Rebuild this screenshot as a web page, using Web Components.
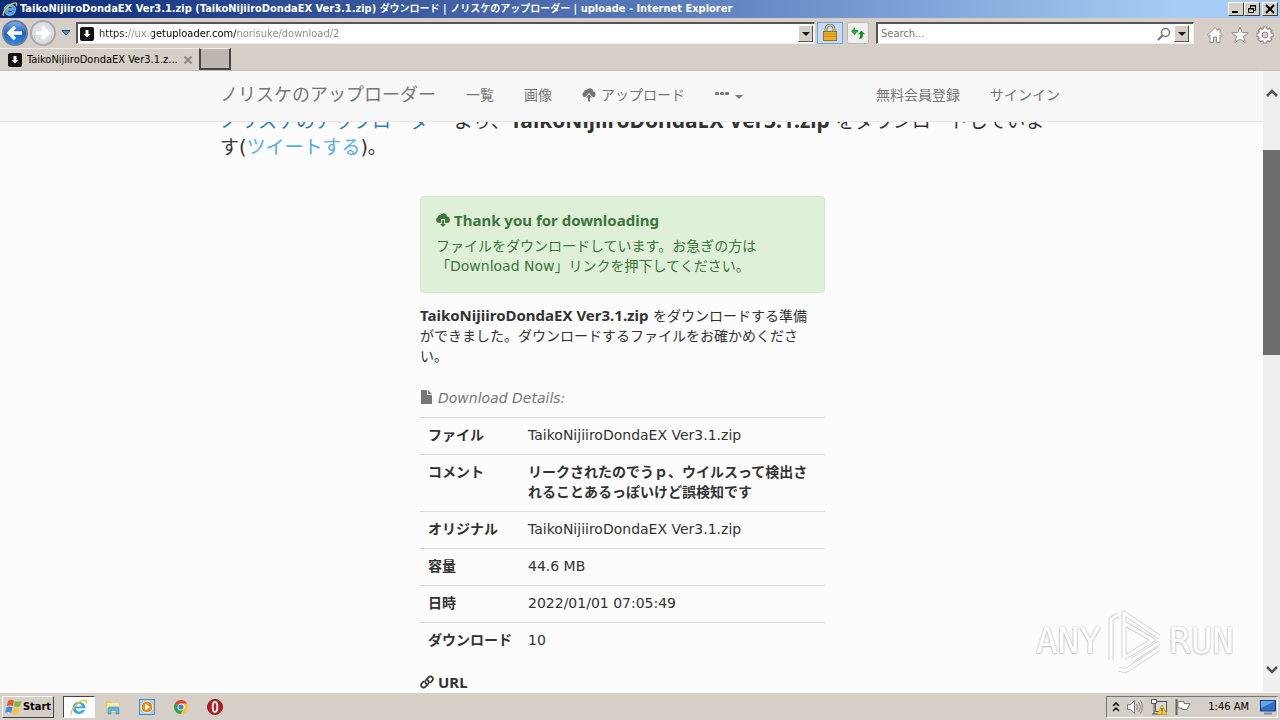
<!DOCTYPE html>
<html lang="ja">
<head>
<meta charset="utf-8">
<title>TaikoNijiiroDondaEX Ver3.1.zip</title>
<style>
	html, body {
		height: 100%;
		margin: 0;
	}
	body {
		display: flex;
		flex-direction: column;
		overflow: hidden;
		background: #fcfcfc;
		color: #333;
		font: 14px/20px "DejaVu Sans", "Noto Sans CJK JP", sans-serif;
		--face: #d6cfc8;
		--ui: 11px/14px "DejaVu Sans Condensed", "DejaVu Sans", "Noto Sans CJK JP", sans-serif;
		--bold: "Noto Sans", "Noto Sans CJK JP", sans-serif;
	}
</style>
</head>
<body>
<title-bar>TaikoNijiiroDondaEX Ver3.1.zip (TaikoNijiiroDondaEX Ver3.1.zip) <small>ダウンロード</small> | <small>ノリスケのアップローダー</small> | uploade - Internet Explorer</title-bar>
<address-bar></address-bar>
<tab-strip>TaikoNijiiroDondaEX Ver3.1.z...</tab-strip>
<page-view>
	<site-nav slot="nav"></site-nav>
	<download-page></download-page>
</page-view>
<task-bar></task-bar>

<script>
(function () {
	const icons = {
		ie: `<svg viewBox="0 0 18 18"><path d="M15.500 10.500H6.200c.2 3.200 4.300 3.700 5.400 1.400h3.600C12.500 18.500 2.500 17.500 2.500 9.800 2.500 1.500 16 1.500 15.500 10.500zM6.300 8.300h5.400c-.2-3-5-3-5.400 0z" fill="#3aa6ea" stroke="#d8f3ff" stroke-width=".5"/><path d="M2 16.500C-1 14 7 4 13.500 2.300c3-.8 3.500 1 2.500 3.200" fill="none" stroke="#f2c230" stroke-width="1.500"/></svg>`,
		back: `<svg viewBox="0 0 28 28"><defs><linearGradient id="g" x2="0" y2="1"><stop stop-color="#7fb5ee"/><stop offset=".5" stop-color="#1f62c4"/><stop offset="1" stop-color="#2d8ce8"/></linearGradient></defs><circle cx="14" cy="14" r="12" fill="url(#g)" stroke="#6c7c98" stroke-width="2"/><path d="M21 14H8m6-6-6 6 6 6" fill="none" stroke="#fff" stroke-width="3.500"/></svg>`,
		forward: `<svg viewBox="0 0 28 28"><circle cx="14" cy="14" r="12" fill="#dde0e2" stroke="#aaa9aa" stroke-width="2"/><path d="M7 14h12m-6-6 6 6-6 6" fill="none" stroke="#fff" stroke-width="4"/><path d="M5 16a9 9 0 0 0 18 0" fill="none" stroke="#c5cbd1"/></svg>`,
		history: `<svg viewBox="0 0 10 8"><path d="M1 1.500h8L5 6z" fill="#4e9bd0" stroke="#153f77"/></svg>`,
		down: `<svg viewBox="0 0 8 8"><path d="M0 2h8L4 6z" fill="#111"/></svg>`,
		site: `<svg viewBox="0 0 14 14"><rect width="14" height="14" rx="2" fill="#111"/><path d="M5.500 3h3v4h2L7 10.500 3.500 7h2z" fill="#fff"/></svg>`,
		lock: `<svg viewBox="0 0 16 18"><path d="M4 8V5a4 4 0 0 1 8 0v3" fill="none" stroke="#8c805a" stroke-width="3"/><path d="M4 8V5a4 4 0 0 1 8 0v3" fill="none" stroke="#e6dcae"/><rect x="1.500" y="7.500" width="13" height="9" fill="#edb127" stroke="#9d741b"/><path d="M2 10h12M2 12.500h12" stroke="#c88d18"/></svg>`,
		refresh: `<svg viewBox="0 0 16 16"><path d="M0 6l4.500-4.500v3H8V7H6.500L4.500 10.500z" fill="#2ca33a"/><path d="M16 9.500l-4-4.500-4 4.500h2.500V12L9 14.500h3l1.500-2.500V9.500z" fill="#178a2b"/></svg>`,
		search: `<svg viewBox="0 0 14 14"><circle cx="8.500" cy="5.500" r="4" fill="none" stroke="#777" stroke-width="1.500"/><path d="M5.500 8.500 1 13" stroke="#777" stroke-width="2"/></svg>`,
		home: `<svg viewBox="0 0 18 18"><path d="M9 1.500 1.500 9l1.300 1.200L4 9v7.500h3.500V11h3v5.500H14V9l1.200 1.200L16.500 9 14 6.500V3h-2v1.500z" fill="#fff" stroke="#918b88"/></svg>`,
		star: `<svg viewBox="0 0 18 18"><path d="m9 1 2.200 5.500 6 .3-4.700 3.700 1.700 6L9 13.200l-5.200 3.300 1.700-6L.8 6.800l6-.3z" fill="#fff" stroke="#918b88"/></svg>`,
		gear: `<svg viewBox="0 0 18 18"><g fill="none"><g stroke="#8a8481" stroke-width="4.600"><path d="M9 .5v17M.5 9h17M3 3l12 12M15 3 3 15"/></g><circle cx="9" cy="9" r="4.800" stroke="#8a8481" stroke-width="4.400"/><g stroke="#fff" stroke-width="2.600"><path d="M9 1.500v15M1.500 9h15M3.700 3.700l10.600 10.600M14.300 3.700 3.700 14.300"/></g><circle cx="9" cy="9" r="4.800" stroke="#fff" stroke-width="2.600"/></g><circle cx="9" cy="9" r="3" fill="#d6cfc8" stroke="#8a8481"/></svg>`,
		close: `<svg viewBox="0 0 10 10"><path d="m1.500 1.500 7 7m0-7-7 7" stroke="#8c8580" stroke-width="2"/></svg>`,
		up: `<svg viewBox="0 0 12 8"><path d="m1 7 5-5 5 5" fill="none" stroke="#555" stroke-width="2.500"/></svg>`,
		chevron: `<svg viewBox="0 0 12 8"><path d="m1 1 5 5 5-5" fill="none" stroke="#555" stroke-width="2.500"/></svg>`,
		upload: `<svg viewBox="0 0 14 14"><path d="M3 9.500A3 3 0 0 1 1.800 4 2.300 2.300 0 0 1 4.600 2 3.600 3.600 0 0 1 11.300 3.300 3.200 3.200 0 0 1 11 9.500z" fill="#777"/><path d="M7 5 2.500 10H5v4.500h4V10h2.500z" fill="#f8f8f8"/><path d="M7 6.200 3.800 9.500H6v4h2v-4h2.200z" fill="#777"/></svg>`,
		download: `<svg viewBox="0 0 14 14"><path d="M3 10a3 3 0 0 1-1.200-5.700A2.300 2.300 0 0 1 4.600 2.200 3.600 3.600 0 0 1 11.300 3.500 3.300 3.300 0 0 1 11 10z" fill="#3c763d"/><path d="M5 6h4v4h3l-5 4-5-4h3z" fill="#dff0d8"/><path d="M6 7h2v4h2l-3 3-3-3h2z" fill="#3c763d"/></svg>`,
		file: `<svg viewBox="0 0 14 14"><path d="M1 0h6v5h5v9H1z" fill="#777"/><path d="M8 0v4h4z" fill="#777"/></svg>`,
		link: `<svg viewBox="0 0 14 14"><g fill="none" stroke="#333" stroke-width="1.700" stroke-linecap="round"><path d="M6.200 8.800C4.500 7 5 6 6 5l2.500-2.700c1-1 2.600-1.100 3.600-.2s1 2.500.1 3.600L10.500 7.500"/><path d="M7.800 5.200C9.500 7 9 8 8 9l-2.500 2.700c-1 1-2.600 1.100-3.600.2s-1-2.500-.1-3.600L3.500 6.500"/></g></svg>`,
		windows: `<svg viewBox="0 0 18 18"><path d="M3 3c2-1.500 4-1.500 6-.5L7.800 8C6 7 4 7 1.800 8.200z" fill="#e8572a"/><path d="M10 3c2 1 4 1 6.500-.2L15 8.200C13 9.200 11 9.200 8.800 8z" fill="#7dbb3c"/><path d="M1.500 9.500c2-1.200 4-1.200 6-.2l-1.300 5.500c-2-1-4-1-6 .2z" fill="#3d8be0"/><path d="M8.500 9.500c2 1 4 1 6.200 0l-1.400 5.500c-2 1-4 1-6.200 0z" fill="#f6c338"/></svg>`,
		folder: `<svg viewBox="0 0 18 18"><path d="M2 3h5l1 1.500h7V15H2z" fill="#e9c65e"/><path d="M3 5h12v9H3z" fill="#f7e9a6"/><path d="M4 16v-5.500q0-1.500 1.500-1.500h8q1.500 0 1.500 1.500V16h-3v-3.500H7V16z" fill="#62b5e0" stroke="#3f8dbe" stroke-width=".6"/></svg>`,
		player: `<svg viewBox="0 0 18 18"><rect x="1.500" y="1.500" width="15" height="15" fill="#a9d2f1" stroke="#4d8cc2"/><circle cx="9" cy="9" r="5.800" fill="#f08818" stroke="#fff" stroke-width=".8"/><path d="m7 5.500 5 3.500-5 3.500z" fill="#fff"/></svg>`,
		chrome: `<svg viewBox="0 0 18 18"><circle cx="9" cy="9" r="7" fill="#f5c62c"/><path d="M9 9 2.900 5.500A7 7 0 0 1 15.100 5.500H9z" fill="#dc4437"/><path d="M2.900 5.500A7 7 0 0 0 8.500 16L12 10.700 9 9z" fill="#2e9f58"/><circle cx="9" cy="9" r="3.500" fill="#fff"/><circle cx="9" cy="9" r="2.600" fill="#4480df"/></svg>`,
		opera: `<svg viewBox="0 0 18 18"><circle cx="9" cy="9" r="7.500" fill="#b91c22" stroke="#7e1518"/><ellipse cx="9" cy="9" rx="2.300" ry="5" fill="#b91c22" stroke="#fff" stroke-width="1.800"/></svg>`,
		more: `<svg viewBox="0 0 8 12"><path d="m1 5 3-3 3 3M1 10l3-3 3 3" fill="none" stroke="#000" stroke-width="1.500"/></svg>`,
		volume: `<svg viewBox="0 0 18 18"><path d="M1.500 6.500h3l4-4v13l-4-4h-3z" fill="#fff" stroke="#777"/><path d="M10.500 6q2 3 0 6M12.500 4q3.500 5 0 10M14.500 2.500q4 6.500 0 13" fill="none" stroke="#888"/></svg>`,
		network: `<svg viewBox="0 0 18 18"><rect x="5.500" y="3.500" width="11" height="10" fill="#d9d9d9" stroke="#555"/><path d="M1.500 1.500h5v4h-5z" fill="#fff" stroke="#555"/><path d="M4 5v11M2 16h8" fill="none" stroke="#555"/><path d="m12 7 5 9.500H7z" fill="#f8d32a" stroke="#ae8b12" stroke-width=".7"/><path d="M12 10v3.500m0 1v1" stroke="#333"/></svg>`,
		flag: `<svg viewBox="0 0 18 18"><path d="M2.500 1v16" stroke="#666" stroke-width="2"/><path d="M4 3.500h6v2h6l-3 6H8v-1.500H4z" fill="#fff" stroke="#777"/></svg>`,
		desktop: `<svg viewBox="0 0 18 18"><rect x="1.500" y="2.500" width="15" height="10.500" fill="#2a72cb" stroke="#1f3f73"/><path d="M2 3h14L2 10z" fill="#63a7ec"/><path d="M5 15.500h8" stroke="#889" stroke-width="2"/></svg>`,
		play: `<svg viewBox="0 0 60 66"><defs><path id="p" d="M6 52V11l7-4M14 61l6 2 34-22M19 50V5l35 24M19 50l29-18-29-17M27 52l27-17" fill="none" stroke-linejoin="round"/></defs><use href="#p" stroke="#d2d2d2" stroke-width="5"/><use href="#p" stroke="#fff" stroke-width="3"/></svg>`
	};

	function define(name, html) {
		const template = document.createElement("template");
		template.innerHTML = html;
		customElements.define(name, class extends HTMLElement {
			constructor() {
				super();
				this.attachShadow({ mode: "open" }).appendChild(template.content.cloneNode(true));
			}
		});
	}

	class UiIcon extends HTMLElement {
		connectedCallback() {
			if (this.shadowRoot) return;
			this.attachShadow({ mode: "open" }).innerHTML = `
				<style>
				:host { display: inline-block; width: 14px; height: 14px; flex: none; }
				svg { display: block; width: 100%; height: 100%; }
				</style>${icons[this.getAttribute("name")] || ""}`;
		}
	}
	customElements.define("ui-icon", UiIcon);

	define("title-bar", `
		<style>
		:host {
			display: flex;
			align-items: center;
			height: 18px;
			padding: 0 2px;
			gap: 2px;
			background: linear-gradient(90deg, #0a2a78, #5677b8 50%, #a6cdf5 92%);
			color: #fff;
			font: var(--ui);
			font-weight: bold;
		}
		.text { flex: 1; white-space: nowrap; overflow: hidden; }
		::slotted(small) { font-size: 10px; }
		ui-icon { width: 16px; height: 16px; }
		button {
			width: 16px;
			height: 14px;
			padding: 0;
			display: grid;
			place-items: center;
			background: var(--face);
			border: 1px solid;
			border-color: #fff #404040 #404040 #fff;
		}
		button:last-child { margin-left: 2px; }
		.buttons { display: flex; }
		svg { width: 10px; height: 10px; }
		</style>
		<ui-icon name="ie"></ui-icon>
		<div class="text"><slot></slot></div>
		<div class="buttons">
			<button aria-label="Minimize"><svg viewBox="0 0 10 10"><path d="M1 8h6" stroke="#000" stroke-width="2"/></svg></button>
			<button aria-label="Restore"><svg viewBox="0 0 10 10"><path d="M3.500 4V1.500h5v5H7M3 2h6M1.500 4.500h5v4h-5zM1 5h6" fill="none" stroke="#000"/></svg></button>
			<button aria-label="Close"><svg viewBox="0 0 10 10"><path d="m1 1 8 8m0-8-8 8" stroke="#000" stroke-width="2"/></svg></button>
		</div>
	`);

	define("address-bar", `
		<style>
		:host {
			display: flex;
			align-items: center;
			height: 30px;
			padding: 0 6px 0 1px;
			background: var(--face);
			font: var(--ui);
		}
		button {
			display: grid;
			place-items: center;
			padding: 0;
			border: 0;
			background: none;
		}
		.round ui-icon { width: 28px; height: 28px; }
		.history { width: 18px; }
		.history ui-icon { width: 10px; height: 8px; }
		.field {
			display: flex;
			align-items: center;
			box-sizing: border-box;
			height: 22px;
			padding: 1px;
			background: #fff;
			border: 1px solid;
			border-width: 2px 1px 1px 2px;
			border-color: #555 #eee #eee #555;
		}
		.url { flex: 1; margin-left: 1px; padding-left: 2px; gap: 5px; }
		.find { width: 318px; margin: 0 12px 0 7px; padding-left: 3px; }
		input {
			flex: 1;
			min-width: 0;
			padding: 0;
			border: 0;
			outline: 0;
			background: none;
			font: inherit;
		}
		.url input {
			color: transparent;
			background: linear-gradient(90deg, #222 28px, #888 28px 53px, #000 53px 137px, #888 137px);
			-webkit-background-clip: text;
			background-clip: text;
		}
		.find input::placeholder { color: #777; }
		.drop {
			width: 15px;
			height: 17px;
			background: var(--face);
			border: 1px solid;
			border-color: #fff #555 #555 #fff;
		}
		.drop ui-icon { width: 8px; height: 8px; }
		.find .drop { margin: 0 3px; }
		.lock, .reload {
			width: 26px;
			height: 22px;
			margin-left: 2px;
			background: #c5dcf8;
			border: 1px solid #75a5dc;
		}
		.lock ui-icon { width: 16px; height: 18px; }
		.reload {
			width: 22px;
			margin-left: 4px;
			background: #f0efed;
			border-color: #c0bab4;
			border-radius: 2px;
		}
		.tools { display: flex; gap: 7px; margin-top: 4px; }
		.tools ui-icon { width: 18px; height: 18px; }
		</style>
		<button class="round" aria-label="Back"><ui-icon name="back"></ui-icon></button>
		<button class="round" aria-label="Forward"><ui-icon name="forward"></ui-icon></button>
		<button class="history" aria-label="Recent pages"><ui-icon name="history"></ui-icon></button>
		<div class="field url">
			<ui-icon name="site"></ui-icon>
			<input type="text" aria-label="Address" value="https://ux.getuploader.com/norisuke/download/2">
			<button class="drop" aria-label="Show addresses"><ui-icon name="down"></ui-icon></button>
		</div>
		<button class="lock" aria-label="Security report"><ui-icon name="lock"></ui-icon></button>
		<button class="reload" aria-label="Refresh"><ui-icon name="refresh"></ui-icon></button>
		<div class="field find">
			<input type="text" aria-label="Search" placeholder="Search...">
			<ui-icon name="search"></ui-icon>
			<button class="drop" aria-label="Search options"><ui-icon name="down"></ui-icon></button>
		</div>
		<div class="tools">
			<button aria-label="Home"><ui-icon name="home"></ui-icon></button>
			<button aria-label="Favorites"><ui-icon name="star"></ui-icon></button>
			<button aria-label="Tools"><ui-icon name="gear"></ui-icon></button>
		</div>
	`);

	define("tab-strip", `
		<style>
		:host {
			display: flex;
			height: 22px;
			border-bottom: 1px solid #c4bcb6;
			background: var(--face);
			font: var(--ui);
			color: #000;
		}
		.tab {
			display: flex;
			align-items: center;
			box-sizing: border-box;
			width: 199px;
			padding: 0 6px 0 8px;
			gap: 5px;
			border-top: 1px solid #eee;
		}
		.tab span { flex: 1; white-space: nowrap; }
		button { padding: 0; border: 0; background: none; }
		.tab button { display: grid; }
		.tab ui-icon[name=close] { width: 10px; height: 10px; }
		.new {
			width: 32px;
			background: #bdb6b1;
			border: 1px solid;
			border-width: 1px 2px 2px;
			border-color: #eee #444 #444 #444;
		}
		</style>
		<div class="tab">
			<ui-icon name="site"></ui-icon>
			<span><slot></slot></span>
			<button aria-label="Close tab"><ui-icon name="close"></ui-icon></button>
		</div>
		<button class="new" aria-label="New tab"></button>
	`);

	define("page-view", `
		<style>
		:host {
			display: block;
			position: relative;
			flex: 1;
			min-height: 0;
			overflow: hidden;
		}
		.scroll {
			position: absolute;
			z-index: 3;
			top: 0;
			right: 0;
			bottom: 0;
			width: 17px;
			display: flex;
			flex-direction: column;
			background: #efefef;
		}
		.track {
			flex: 1;
			display: grid;
			grid-template-rows: 35fr 205fr 293fr;
		}
		.thumb { grid-row: 2; background: #6d6d6d; }
		button {
			display: grid;
			place-items: center;
			height: 44px;
			padding: 0;
			border: 0;
			background: none;
		}
		ui-icon { width: 12px; height: 8px; }
		/* recording watermark, floats over the page */
		.mark {
			position: absolute;
			z-index: 2;
			right: 46px;
			bottom: 18px;
			display: flex;
			align-items: center;
			gap: 4px;
			color: #fff;
			font: 36px/66px "DejaVu Sans Mono", monospace;
			text-shadow: 0 0 2px #aaa, 0 1px 2px #ccc;
		}
		.mark ui-icon { width: 60px; height: 66px; }
		</style>
		<slot name="nav"></slot>
		<slot></slot>
		<div class="mark"><span>ANY</span><ui-icon name="play"></ui-icon><span>RUN</span></div>
		<div class="scroll">
			<button aria-label="Scroll up"><ui-icon name="up"></ui-icon></button>
			<div class="track"><div class="thumb"></div></div>
			<button aria-label="Scroll down"><ui-icon name="chevron"></ui-icon></button>
		</div>
	`);

	define("site-nav", `
		<style>
		:host {
			display: block;
			position: sticky;
			top: 0;
			z-index: 1;
			background: #f8f8f8;
			border-bottom: 1px solid #e7e7e7;
		}
		nav {
			display: flex;
			max-width: 870px;
			margin: 0 auto;
		}
		a {
			display: flex;
			align-items: center;
			gap: 5px;
			padding: 14px 15px 16px;
			color: #777;
			text-decoration: none;
			white-space: nowrap;
		}
		.brand { font-size: 18px; }
		.right { display: flex; margin-left: auto; }
		.more { gap: 6px; }
		.dots { width: 14px; height: 14px; }
		.caret {
			margin-top: 4px;
			border: 4px solid transparent;
			border-top-color: #777;
			border-bottom: 0;
		}
		</style>
		<nav>
			<a class="brand" href="#">ノリスケのアップローダー</a>
			<a href="#">一覧</a>
			<a href="#">画像</a>
			<a href="#"><ui-icon name="upload"></ui-icon>アップロード</a>
			<a class="more" href="#" aria-label="Menu"><svg class="dots" viewBox="0 0 14 14"><g fill="#777"><rect y="4" width="4" height="3" rx="1"/><rect x="5" y="4" width="4" height="3" rx="1"/><rect x="10" y="4" width="4" height="3" rx="1"/></g></svg><span class="caret"></span></a>
			<div class="right">
				<a href="#">無料会員登録</a>
				<a href="#">サインイン</a>
			</div>
		</nav>
	`);

	define("success-alert", `
		<style>
		:host {
			display: block;
			padding: 15px 15px 16px;
			background: #dff0d8;
			border: 1px solid #d0e9c6;
			border-radius: 4px;
			color: #3c763d;
		}
		h4 {
			display: flex;
			align-items: center;
			gap: 4px;
			margin: 0 0 8px;
			font: bold 15px/16px var(--bold);
		}
		p { margin: 0; }
		</style>
		<h4><ui-icon name="download"></ui-icon><slot name="title"></slot></h4>
		<p><slot></slot></p>
	`);

	define("download-details", `
		<style>
		:host { display: block; }
		table {
			width: 100%;
			border-collapse: collapse;
			table-layout: fixed;
		}
		caption {
			padding-bottom: 9px;
			color: #777;
			font-style: italic;
			text-align: left;
		}
		caption ui-icon { vertical-align: -1px; margin-right: 4px; }
		th, td {
			padding: 7px 8px 9px;
			border-top: 1px solid #ddd;
			text-align: left;
			vertical-align: top;
		}
		th { width: 84px; white-space: nowrap; }
		</style>
		<table>
			<caption><ui-icon name="file"></ui-icon>Download Details:</caption>
			<tbody>
				<tr><th scope="row">ファイル</th><td>TaikoNijiiroDondaEX Ver3.1.zip</td></tr>
				<tr><th scope="row">コメント</th><td><b>リークされたのでうｐ、ウイルスって検出されることあるっぽいけど誤検知です</b></td></tr>
				<tr><th scope="row">オリジナル</th><td>TaikoNijiiroDondaEX Ver3.1.zip</td></tr>
				<tr><th scope="row">容量</th><td>44.6 MB</td></tr>
				<tr><th scope="row">日時</th><td>2022/01/01 07:05:49</td></tr>
				<tr><th scope="row">ダウンロード</th><td>10</td></tr>
			</tbody>
		</table>
	`);

	define("download-page", `
		<style>
		/* the page is scrolled, so the heading starts behind the nav */
		:host {
			display: block;
			max-width: 840px;
			margin: -15px auto 0;
		}
		h1 {
			margin: 0 0 36px;
			font-size: 19px;
			font-weight: normal;
			line-height: 26px;
		}
		h1 strong { font: bold 21px/26px var(--bold); }
		a { color: #337ab7; text-decoration: none; }
		a.tweet { color: #55acee; }
		.column {
			max-width: 405px;
			margin-left: 200px;
		}
		p { margin: 12px 0 22px; padding-right: 10px; }
		p strong { font: bold 15px/20px var(--bold); }
		h4 {
			display: flex;
			align-items: center;
			gap: 4px;
			margin: 13px 0 0;
			font: bold 15px/20px var(--bold);
		}
		</style>
		<h1><a href="#">ノリスケのアップローダー</a> より、<strong>TaikoNijiiroDondaEX Ver3.1.zip</strong> をダウンロードしています(<a class="tweet" href="#">ツイートする</a>)。</h1>
		<div class="column">
			<success-alert><span slot="title">Thank you for downloading</span>ファイルをダウンロードしています。お急ぎの方は「Download Now」リンクを押下してください。</success-alert>
			<p><strong>TaikoNijiiroDondaEX Ver3.1.zip</strong> をダウンロードする準備ができました。ダウンロードするファイルをお確かめください。</p>
			<download-details></download-details>
			<h4><ui-icon name="link"></ui-icon>URL</h4>
		</div>
	`);

	define("task-bar", `
		<style>
		:host {
			display: flex;
			align-items: center;
			box-sizing: border-box;
			height: 28px;
			padding: 2px 2px 1px;
			border-top: 1px solid #fff;
			background: var(--face);
			font: var(--ui);
			color: #000;
		}
		button {
			display: flex;
			align-items: center;
			justify-content: center;
			box-sizing: border-box;
			width: 34px;
			height: 22px;
			padding: 0;
			border: 0;
			background: none;
			font: inherit;
		}
		ui-icon { width: 18px; height: 18px; }
		.start {
			width: 52px;
			margin-right: 9px;
			border: 1px solid;
			border-color: #fff #444 #444 #fff;
			font-weight: bold;
		}
		.active {
			width: 32px;
			background: #fff;
			border: 1px solid;
			border-color: #444 #fff #fff #444;
		}
		.active + button { margin-left: 1px; }
		.tray {
			display: flex;
			align-items: center;
			box-sizing: border-box;
			height: 22px;
			margin-left: auto;
			padding: 0 0 0 5px;
			gap: 6px;
			border: 1px solid;
			border-color: #777 #fff #fff #777;
		}
		.tray button { width: 18px; }
		.tray .more { width: 8px; }
		.more ui-icon { width: 8px; height: 12px; }
		time { margin: 0 4px 0 10px; }
		</style>
		<button class="start"><ui-icon name="windows"></ui-icon>Start</button>
		<button class="active" aria-label="Internet Explorer"><ui-icon name="ie"></ui-icon></button>
		<button aria-label="Explorer"><ui-icon name="folder"></ui-icon></button>
		<button aria-label="Media Player"><ui-icon name="player"></ui-icon></button>
		<button aria-label="Chrome"><ui-icon name="chrome"></ui-icon></button>
		<button aria-label="Opera"><ui-icon name="opera"></ui-icon></button>
		<div class="tray">
			<button class="more" aria-label="Hidden icons"><ui-icon name="more"></ui-icon></button>
			<button aria-label="Volume"><ui-icon name="volume"></ui-icon></button>
			<button aria-label="Network"><ui-icon name="network"></ui-icon></button>
			<button aria-label="Action Center"><ui-icon name="flag"></ui-icon></button>
			<time>1:46 AM</time>
			<button aria-label="Show desktop"><ui-icon name="desktop"></ui-icon></button>
		</div>
	`);
})();
</script>
</body>
</html>
